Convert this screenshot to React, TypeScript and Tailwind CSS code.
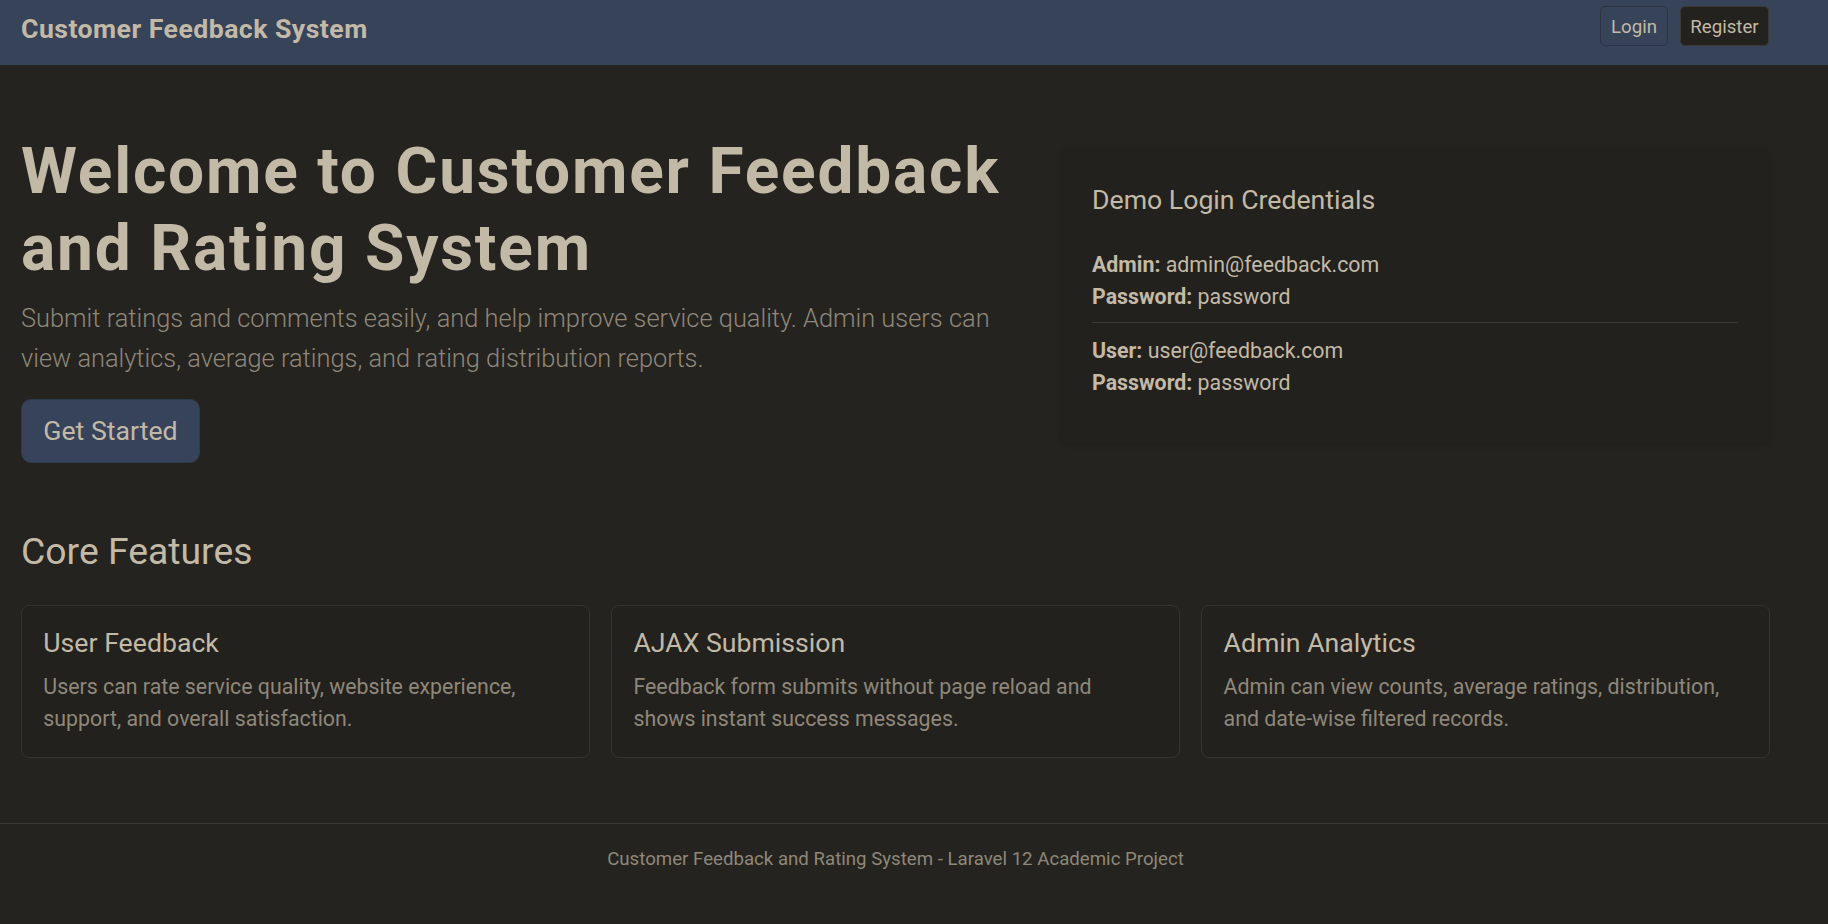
import React from "react";

function Credential({ label, value }: { label: string; value: string }) {
  return (
    <p className="text-[21.33px] leading-[32px]">
      <span className="font-bold">{label}</span> {value}
    </p>
  );
}

function FeatureCard({ title, text }: { title: string; text: string }) {
  return (
    <div className="rounded-[8px] border border-[#35332e] bg-[#22211d] p-[21.33px]">
      <h5 className="mb-[12px] text-[26.67px] leading-[32px] text-[#c3b9a7]">{title}</h5>
      <p className="text-[21.33px] leading-[32px] text-[#8f877a]">{text}</p>
    </div>
  );
}

export default function App() {
  return (
    <div className="min-h-screen bg-[#24231f] font-['Roboto','Open_Sans',sans-serif] text-[#c3b9a7]">
      <nav className="h-[65px] bg-[#374359]">
        <div className="ml-[21px] flex h-full w-[1748px] items-start justify-between pt-[6px]">
          <a className="text-[26.67px] font-bold leading-[46px] tracking-[0.017em] text-[#c3b9a7]">
            Customer Feedback System
          </a>
          <div className="flex items-center gap-[12px]">
            <button className="h-[40px] w-[68px] rounded-[5px] border border-[#2d3545] text-[18.67px] leading-[40px] text-[#c3b9a7]">
              Login
            </button>
            <button className="h-[40px] w-[89px] rounded-[5px] border border-[#3a3935] bg-[#23221f] text-[18.67px] leading-[40px] text-[#c3b9a7]">
              Register
            </button>
          </div>
        </div>
      </nav>

      <main className="ml-[21px] w-[1749px]">
        <section className="flex items-center justify-between pt-[64px] pb-[64px]">
          <div className="w-[1007px]">
            <h1 className="mt-[5px] mb-[10.67px] text-[64px] font-bold leading-[1.2] tracking-[0.028em]">
              Welcome to Customer Feedback and Rating System
            </h1>
            <p className="mb-[21px] text-[25.4px] font-light leading-[40px] text-[#8f877a]">
              Submit ratings and comments easily, and help improve service quality. Admin users can view analytics,
              average ratings, and rating distribution reports.
            </p>
            <button className="h-[64px] rounded-[10px] border border-[#2f3a4d] bg-[#37435a] px-[21.33px] text-[26.67px] text-[#c3b9a7]">
              Get Started
            </button>
          </div>
          <div className="w-[710px] rounded-[10px] bg-[#22211d] px-[32px] pt-[36px] pb-[45px] shadow-[0_2px_5px_rgba(0,0,0,0.1)]">
            <h5 className="mb-[33px] text-[26.67px] leading-[32px]">Demo Login Credentials</h5>
            <Credential label="Admin:" value="admin@feedback.com" />
            <Credential label="Password:" value="password" />
            <hr className="mt-[9px] mb-[12px] border-t border-[#3a3935]" />
            <Credential label="User:" value="user@feedback.com" />
            <Credential label="Password:" value="password" />
          </div>
        </section>

        <section className="pb-[65px]">
          <h3 className="mt-[2px] mb-[31px] text-[37.33px] leading-[1.2]">Core Features</h3>
          <div className="grid grid-cols-3 gap-[21.33px]">
            <FeatureCard
              title="User Feedback"
              text="Users can rate service quality, website experience, support, and overall satisfaction."
            />
            <FeatureCard
              title="AJAX Submission"
              text="Feedback form submits without page reload and shows instant success messages."
            />
            <FeatureCard
              title="Admin Analytics"
              text="Admin can view counts, average ratings, distribution, and date-wise filtered records."
            />
          </div>
        </section>
      </main>

      <footer className="border-t border-[#3a3935] py-[21.33px]">
        <div className="ml-[21px] w-[1749px] text-center text-[18.67px] leading-[28px] text-[#8f877a]">
          Customer Feedback and Rating System - Laravel 12 Academic Project
        </div>
      </footer>
    </div>
  );
}
